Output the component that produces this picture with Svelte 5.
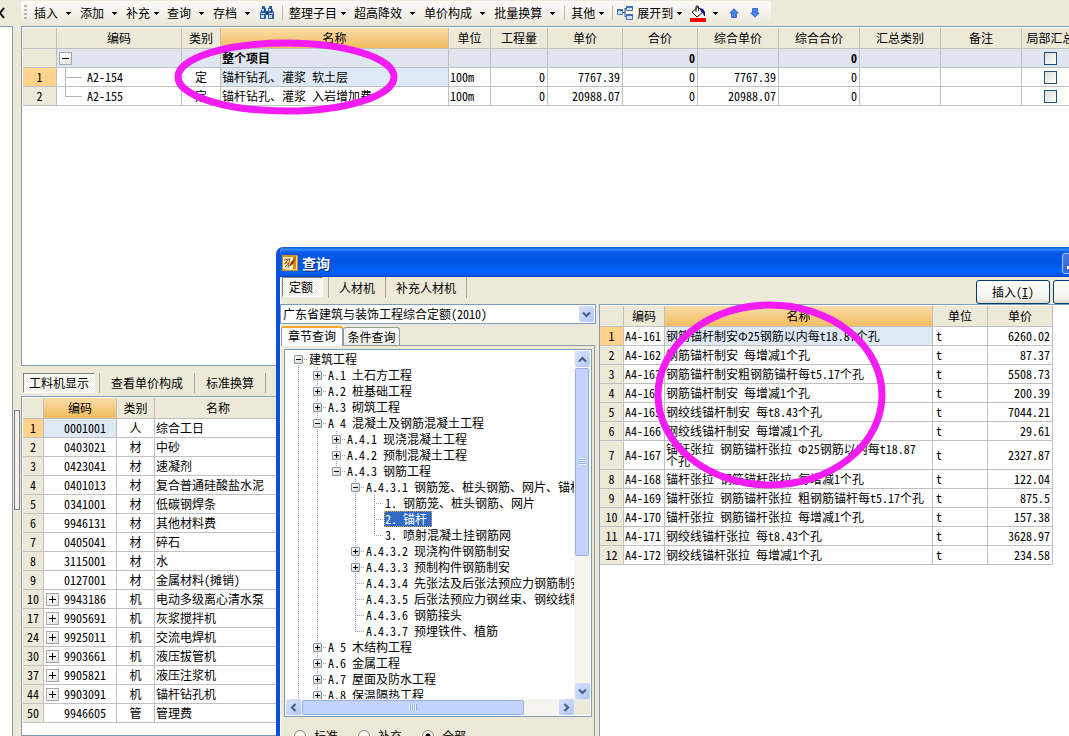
<script>
  const tools = [
    { label: '插入' },
    { label: '添加' },
    { label: '补充', tight: true },
    { label: '查询' },
    { label: '存档' },
    { icon: 'find' },
    { sep: true },
    { label: '整理子目', tight: true },
    { label: '超高降效' },
    { label: '单价构成' },
    { label: '批量换算' },
    { sep: true },
    { label: '其他', tight: true },
    { sep: true, near: true },
    { icon: 'expand', label: '展开到', tight: true },
    { icon: 'fill', name: '填充颜色', arrow: true },
    { icon: 'up', name: '上移' },
    { icon: 'down', name: '下移' }
  ];

  const mainCols = [34, 125, 39, 228, 42, 57, 75, 75, 81, 81, 81, 81, 58];
  const mainHead = ['', '编码', '类别', '名称', '单位', '工程量', '单价', '合价', '综合单价', '综合合价', '汇总类别', '备注', '局部汇总'];
  const mainRows = [
    { n: '', code: '', kind: '', name: '整个项目', unit: '', qty: '', price: '', total: '0', cp: '', ct: '0', root: true },
    { n: '1', code: 'A2-154', kind: '定', name: '锚杆钻孔、灌浆 软土层', unit: '100m', qty: '0', price: '7767.39', total: '0', cp: '7767.39', ct: '0', cur: true },
    { n: '2', code: 'A2-155', kind: '定', name: '锚杆钻孔、灌浆 入岩增加费', unit: '100m', qty: '0', price: '20988.07', total: '0', cp: '20988.07', ct: '0', last: true }
  ];

  const resources = [
    ['1', '0001001', '人', '综合工日'],
    ['2', '0403021', '材', '中砂'],
    ['3', '0423041', '材', '速凝剂'],
    ['4', '0401013', '材', '复合普通硅酸盐水泥'],
    ['5', '0341001', '材', '低碳钢焊条'],
    ['6', '9946131', '材', '其他材料费'],
    ['7', '0405041', '材', '碎石'],
    ['8', '3115001', '材', '水'],
    ['9', '0127001', '材', '金属材料(摊销)'],
    ['10', '9943186', '机', '电动多级离心清水泵', true],
    ['17', '9905691', '机', '灰浆搅拌机', true],
    ['24', '9925011', '机', '交流电焊机', true],
    ['30', '9903661', '机', '液压拔管机', true],
    ['37', '9905821', '机', '液压注浆机', true],
    ['44', '9903091', '机', '锚杆钻孔机', true],
    ['50', '9946605', '管', '管理费']
  ];

  // g: which ancestor levels keep a guide line; box: expander sign
  const tree = [
    { g: [], box: '-', t: '建筑工程', first: true },
    { g: [1], box: '+', t: 'A.1 土石方工程' },
    { g: [1], box: '+', t: 'A.2 桩基础工程' },
    { g: [1], box: '+', t: 'A.3 砌筑工程' },
    { g: [1], box: '-', t: 'A 4 混凝土及钢筋混凝土工程' },
    { g: [1, 1], box: '+', t: 'A.4.1 现浇混凝土工程' },
    { g: [1, 1], box: '+', t: 'A.4.2 预制混凝土工程' },
    { g: [1, 1], box: '-', t: 'A.4.3 钢筋工程', last: true },
    { g: [1, 1, 0], box: '-', t: 'A.4.3.1 钢筋笼、桩头钢筋、网片、锚杆' },
    { g: [1, 1, 0, 1], t: '1. 钢筋笼、桩头钢筋、网片' },
    { g: [1, 1, 0, 1], t: '2. 锚杆', sel: true },
    { g: [1, 1, 0, 1], t: '3. 喷射混凝土挂钢筋网', last: true },
    { g: [1, 1, 0], box: '+', t: 'A.4.3.2 现浇构件钢筋制安' },
    { g: [1, 1, 0], box: '+', t: 'A.4.3.3 预制构件钢筋制安' },
    { g: [1, 1, 0], t: 'A.4.3.4 先张法及后张法预应力钢筋制安' },
    { g: [1, 1, 0], t: 'A.4.3.5 后张法预应力钢丝束、钢绞线制安' },
    { g: [1, 1, 0], t: 'A.4.3.6 钢筋接头' },
    { g: [1, 1, 0], t: 'A.4.3.7 预埋铁件、植筋', last: true },
    { g: [1], box: '+', t: 'A 5 木结构工程' },
    { g: [1], box: '+', t: 'A.6 金属工程' },
    { g: [1], box: '+', t: 'A.7 屋面及防水工程' },
    { g: [1], box: '+', t: 'A.8 保温隔热工程' }
  ];

  const quotas = [
    ['1', 'A4-161', '钢筋锚杆制安Φ25钢筋以内每t18.87个孔', '6260.02'],
    ['2', 'A4-162', '钢筋锚杆制安 每增减1个孔', '87.37'],
    ['3', 'A4-163', '钢筋锚杆制安粗钢筋锚杆每t5.17个孔', '5508.73'],
    ['4', 'A4-164', '钢筋锚杆制安 每增减1个孔', '200.39'],
    ['5', 'A4-165', '钢绞线锚杆制安 每t8.43个孔', '7044.21'],
    ['6', 'A4-166', '钢绞线锚杆制安 每增减1个孔', '29.61'],
    ['7', 'A4-167', '锚杆张拉 钢筋锚杆张拉 Φ25钢筋以内每t18.87个孔', '2327.87'],
    ['8', 'A4-168', '锚杆张拉 钢筋锚杆张拉 每增减1个孔', '122.04'],
    ['9', 'A4-169', '锚杆张拉 钢筋锚杆张拉 粗钢筋锚杆每t5.17个孔', '875.5'],
    ['10', 'A4-170', '锚杆张拉 钢筋锚杆张拉 每增减1个孔', '157.38'],
    ['11', 'A4-171', '钢绞线锚杆张拉 每t8.43个孔', '3628.97'],
    ['12', 'A4-172', '钢绞线锚杆张拉 每增减1个孔', '234.58']
  ];

  let scope = $state('all');
</script>

{#snippet chevron(d)}
  <svg width="9" height="9" viewBox="0 0 9 9" aria-hidden="true"><path {d} fill="none" stroke="#4d6185" stroke-width="2.2" /></svg>
{/snippet}

{#snippet expander(sign)}
  <button class="expander" aria-label={sign === '+' ? '展开' : '折叠'}>
    <svg width="11" height="11" viewBox="0 0 11 11" aria-hidden="true">
      <path d={sign === '+' ? 'M2 5.5H9M5.5 2V9' : 'M2 5.5H9'} stroke="#000" fill="none" />
    </svg>
  </button>
{/snippet}

<div class="app">
  <div class="toolbar-row">
    <button class="close" aria-label="关闭">
      <svg width="5" height="12" viewBox="0 0 5 12" aria-hidden="true"><path d="M-4 1L4 11M4 1L-4 11" stroke="#000" stroke-width="2" /></svg>
    </button>
    <div class="toolbar" role="toolbar" aria-label="工具栏">
      <span class="grip"></span>
      {#each tools as t}
        {#if t.sep}
          <span class="tsep" class:near={t.near}></span>
        {:else}
          <button class="tool" class:tight={t.tight} class:plain={t.icon && !t.label} aria-label={t.name ?? t.label ?? '查找'}>
            {#if t.icon === 'find'}
              <svg width="16" height="16" viewBox="0 0 16 16" aria-hidden="true">
                <path d="M3 1h3v2h1v3h2V3h1V1h3v2l2 5v6H9v-4H7v4H1V8l2-5z" fill="#2c5fa8" />
                <path d="M3 4h2v2H3zM10 4h2v2h-2zM2 8h4v1H2zM10 8h4v1h-4zM2 10h3v3H2zM10 10h3v3h-3z" fill="#c4dcf6" />
                <path d="M7 7h2v2H7zM5 4h1v3H5zM12 4h1v3h-1z" fill="#173a75" />
              </svg>
            {:else if t.icon === 'expand'}
              <svg width="16" height="16" viewBox="0 0 16 16" aria-hidden="true">
                <path d="M6 7.500h2M8 3v9M8 3.500h2M8 11.500h2" stroke="#4c4c6c" fill="none" />
                <path d="M.5 4.500h5v5h-5zM9.500 1.500h6v4h-6zM9.500 9.500h6v5h-6z" fill="#cfe2fb" stroke="#4678bd" />
                <path d="M0 4h6v2H0zM9 1h7v2H9zM9 9h7v2H9z" fill="#3f72bd" />
              </svg>
            {:else if t.icon === 'fill'}
              <svg width="16" height="17" viewBox="0 0 16 17" aria-hidden="true">
                <path d="M2 7L8 2l5 5-6 5z" fill="#fff" stroke="#111" />
                <path d="M6 7V1.500Q7 0 8.500 1.500V6" fill="none" stroke="#111" />
                <path d="M10 3l3 1 2 3v4h-1l-1-3-2-1z" fill="#10108c" />
                <path d="M0 13h16v4H0z" fill="#f00" />
              </svg>
            {:else if t.icon === 'up'}
              <svg width="10" height="10" viewBox="0 0 10 10" aria-hidden="true"><path d="M5 .7L9.200 5H7.500v4.500h-5V5H.8z" fill="#4a80ea" stroke="#285bc0" stroke-width=".8" /></svg>
            {:else if t.icon === 'down'}
              <svg width="10" height="10" viewBox="0 0 10 10" aria-hidden="true"><path d="M5 9.300L9.200 5H7.500V.5h-5V5H.8z" fill="#4a80ea" stroke="#285bc0" stroke-width=".8" /></svg>
            {/if}
            {#if t.label}<span>{t.label}</span>{/if}
            {#if t.label || t.arrow}
              <svg width="5" height="3" viewBox="0 0 5 3" aria-hidden="true"><path d="M0 0h5v1H0zM1 1h3v1H1zM2 2h1v1H2z" /></svg>
            {/if}
          </button>
        {/if}
      {/each}
    </div>
  </div>

  <div class="workspace">
    <div class="left-pane"></div>
    <div class="splitter"><span class="split-handle"></span></div>
    <div class="panes">
      <section class="grid-pane">
        <table class="grid" style:width="{mainCols.reduce((a, b) => a + b)}px">
          <colgroup>{#each mainCols as w}<col style:width="{w}px" />{/each}</colgroup>
          <thead>
            <tr>{#each mainHead as h}<th class:hot={h === '名称'} scope="col">{h}</th>{/each}</tr>
          </thead>
          <tbody>
            {#each mainRows as r}
              <tr class:root={r.root}>
                <td class="rownum" class:cur={r.cur}>{r.n}</td>
                <td class="nopad">
                  <div class="code-cell">
                    {#if r.root}
                      {@render expander('-')}
                    {:else}
                      <span class="branch" class:last={r.last}></span>{r.code}
                    {/if}
                  </div>
                </td>
                <td class="mid">{r.kind}</td>
                <td class:focus={r.cur}>{r.name}</td>
                <td>{r.unit}</td>
                <td class="num">{r.qty}</td>
                <td class="num">{r.price}</td>
                <td class="num">{r.total}</td>
                <td class="num">{r.cp}</td>
                <td class="num">{r.ct}</td>
                <td></td>
                <td></td>
                <td class="mid"><input class="check" type="checkbox" aria-label="局部汇总" /></td>
              </tr>
            {/each}
          </tbody>
        </table>
      </section>

      <nav class="detail-tabs">
        <button class="tab pressed">工料机显示</button>
        <span class="tab-sep"></span>
        <button class="tab">查看单价构成</button>
        <button class="tab">标准换算</button>
        <button class="tab">换算信息</button>
      </nav>

      <section class="grid-pane">
        <table class="grid resources">
          <colgroup><col class="w21" /><col class="w73" /><col class="w38" /><col class="w127" /></colgroup>
          <thead>
            <tr><th scope="col"></th><th scope="col" class="hot">编码</th><th scope="col">类别</th><th scope="col">名称</th></tr>
          </thead>
          <tbody>
            {#each resources as [n, code, kind, name, more], i}
              <tr>
                <td class="rownum" class:cur={i === 0}>{n}</td>
                <td class="nopad" class:focus={i === 0}>
                  <div class="res-code">
                    {#if more}{@render expander('+')}{/if}
                    <span>{code}</span>
                  </div>
                </td>
                <td class="mid">{kind}</td>
                <td>{name}</td>
              </tr>
            {/each}
          </tbody>
        </table>
      </section>
    </div>
  </div>

  <div class="dialog" role="dialog" aria-labelledby="dialog-title">
    <header class="titlebar">
      <svg width="16" height="16" viewBox="0 0 16 16" aria-hidden="true">
        <path d="M0 0h16v16H0z" fill="#d98a1c" />
        <path d="M1 2h10v12H1z" fill="#fff3d0" />
        <path d="M14 1v13H3v1h12V1z" fill="#ffe08a" />
        <path d="M2 5l5-1-4 4h4l-4 4M8 3L6 13M2 9l3-2" stroke="#b0600c" fill="none" />
        <path d="M14 2L9 7l-2 5 4-3z" fill="#8a3c06" />
      </svg>
      <h1 id="dialog-title">查询</h1>
      <button class="winbtn" aria-label="最小化"><i></i></button>
      <button class="winbtn" aria-label="最大化"></button>
      <button class="winbtn" aria-label="关闭窗口"></button>
    </header>

    <div class="dialog-tools">
      <button class="tab pressed">定额</button>
      <span class="tab-sep"></span>
      <button class="tab">人材机</button>
      <button class="tab">补充人材机</button>
      <div class="actions">
        <button class="push">插入(<u>I</u>)</button>
        <button class="push" aria-label="替换"></button>
      </div>
    </div>

    <div class="dialog-body">
      <aside class="finder">
        <div class="combo">
          <select aria-label="定额库"><option>广东省建筑与装饰工程综合定额(2010)</option></select>
          <span class="combo-arrow">{@render chevron('M1 2.500L4.500 6L8 2.500')}</span>
        </div>
        <div class="page-tabs" role="tablist">
          <button role="tab" aria-selected="true" class="ptab on">章节查询</button>
          <button role="tab" aria-selected="false" class="ptab">条件查询</button>
        </div>
        <div class="page">
          <div class="tree-box">
            <ul class="tree">
              {#each tree as n}
                <li>
                  {#each n.g as on}<span class="guide" class:on></span>{/each}
                  <span class="guide own" class:on={!n.last && !n.first} class:half={n.last} class:start={n.first}>
                    {#if n.box}
                      <button class="node" aria-label={n.box === '+' ? '展开' : '折叠'}>
                        <svg width="7" height="7" viewBox="0 0 7 7" aria-hidden="true"><path d={n.box === '+' ? 'M1 3.500H6M3.500 1V6' : 'M1 3.500H6'} stroke="#000" /></svg>
                      </button>
                    {/if}
                  </span>
                  <span class="leaf" class:sel={n.sel}>{n.t}</span>
                </li>
              {/each}
            </ul>
            <div class="vbar">
              <button class="sbtn" aria-label="向上滚动">{@render chevron('M1 6.500L4.500 3L8 6.500')}</button>
              <span class="vthumb"><i></i></span>
              <button class="sbtn" aria-label="向下滚动">{@render chevron('M1 2.500L4.500 6L8 2.500')}</button>
            </div>
            <div class="hbar">
              <button class="sbtn" aria-label="向左滚动">{@render chevron('M6.500 1L3 4.500L6.500 8')}</button>
              <span class="hthumb"><i></i></span>
              <button class="sbtn" aria-label="向右滚动">{@render chevron('M2.500 1L6 4.500L2.500 8')}</button>
            </div>
            <div class="corner"></div>
          </div>
          <div class="scopes">
            <label><input type="radio" bind:group={scope} value="std" />标准</label>
            <label><input type="radio" bind:group={scope} value="add" />补充</label>
            <label><input type="radio" bind:group={scope} value="all" />全部</label>
          </div>
        </div>
      </aside>

      <section class="results">
        <table class="grid quota">
          <colgroup><col class="w24" /><col class="w41" /><col class="w268" /><col class="w55" /><col class="w65" /></colgroup>
          <thead>
            <tr><th scope="col"></th><th scope="col">编码</th><th scope="col" class="hot">名称</th><th scope="col">单位</th><th scope="col">单价</th></tr>
          </thead>
          <tbody>
            {#each quotas as [n, code, name, price], i}
              <tr>
                <td class="rownum" class:cur={i === 0}>{n}</td>
                <td>{code}</td>
                <td class="wrap" class:focus={i === 0}>{name}</td>
                <td class="unit">t</td>
                <td class="num">{price}</td>
              </tr>
            {/each}
          </tbody>
        </table>
      </section>
    </div>
  </div>

  <svg class="mark mark-top" viewBox="0 0 224 76" aria-hidden="true"><ellipse cx="112" cy="38" rx="108" ry="34" /></svg>
  <svg class="mark mark-dialog" viewBox="0 0 232 188" aria-hidden="true"><ellipse cx="116" cy="94" rx="112" ry="90" /></svg>
</div>

<style>
  :global(body) {
    margin: 0;
    background: #ece9d8;
  }
  .app {
    position: relative;
    display: flex;
    flex-direction: column;
    height: 100vh;
    overflow: hidden;
    background: #ece9d8;
    color: #000;
    font-family: 'Noto Sans CJK SC', sans-serif;
    font-size: 12px;
    line-height: 16px;
    font-feature-settings: 'hwid';
    white-space: pre;
  }
  button,
  select,
  input {
    margin: 0;
    padding: 0;
    border: 0;
    background: none;
    color: inherit;
    font: inherit;
    font-feature-settings: inherit;
    box-sizing: border-box;
  }
  svg {
    display: block;
    flex: none;
  }

  .toolbar-row {
    display: flex;
    flex: none;
    height: 26px;
  }
  .close {
    width: 21px;
    display: flex;
    align-items: center;
  }
  .toolbar {
    display: flex;
    align-items: center;
    height: 24px;
    margin-top: 1px;
    background: linear-gradient(#fbfaf6, #f3f1e8 60%, #e9e6d8);
    border-radius: 2px;
  }
  .grip {
    width: 3px;
    height: 16px;
    margin: 0 7px 0 3px;
    background: repeating-linear-gradient(#bdb9a6 0 2px, transparent 2px 4px);
  }
  .tool {
    display: flex;
    align-items: center;
    gap: 8px;
    height: 22px;
    padding-right: 9px;
  }
  .tool.tight {
    gap: 4px;
    padding-right: 8px;
  }
  .tool.plain {
    gap: 7px;
    padding-right: 11px;
  }
  .tool.plain:has(+ .tsep) {
    padding-right: 7px;
  }
  .tsep {
    width: 1px;
    height: 14px;
    margin-right: 6px;
    background: #bdb9a6;
  }
  .tsep.near {
    margin-right: 4px;
  }

  .workspace {
    flex: 1;
    display: flex;
    min-height: 0;
  }
  .left-pane {
    width: 12px;
    background: #fff;
    border: solid #7f9db9;
    border-width: 1px 1px 0 0;
  }
  .splitter {
    width: 8px;
    display: flex;
    align-items: center;
    justify-content: center;
  }
  .split-handle {
    width: 4px;
    height: 98px;
    margin-top: 158px;
    border: 1px solid #808080;
    background: #f4f2e8;
  }
  .panes {
    flex: 1;
    min-width: 0;
    display: flex;
    flex-direction: column;
  }
  .grid-pane {
    flex: 1 1 0;
    min-height: 0;
    overflow: hidden;
    background: #fff;
    border: solid #7f9db9;
    border-width: 1px 0 1px 1px;
    padding: 1px 0 0 1px;
    box-sizing: border-box;
  }

  .grid {
    table-layout: fixed;
    border-spacing: 0;
    width: 453px;
  }
  .grid.resources {
    width: 259px;
  }
  .w21 { width: 21px; }
  .w24 { width: 24px; }
  .w38 { width: 38px; }
  .w41 { width: 41px; }
  .w55 { width: 55px; }
  .w65 { width: 65px; }
  .w73 { width: 73px; }
  .w127 { width: 127px; }
  .w268 { width: 268px; }
  .grid th {
    height: 20px;
    padding: 0;
    font-weight: 400;
    text-align: center;
    background: #ece9d8;
    border: solid #c0c0c0;
    border-width: 0 1px 1px 0;
  }
  .grid th.hot {
    background: linear-gradient(#fbdcaa, #f0bd5e);
  }
  .grid td {
    height: 18px;
    padding: 0 2px 0 1px;
    border: solid #c0c0c0;
    border-width: 0 1px 1px 0;
    background: #fff;
    overflow: hidden;
  }
  .grid td.num {
    text-align: right;
  }
  .grid td.mid {
    text-align: center;
    padding: 0;
  }
  .grid td.nopad {
    padding: 0;
  }
  .grid td.focus {
    background: #dfe9f5;
  }
  .grid td.unit {
    padding-left: 3px;
  }
  .grid .root td {
    background: #dfe6f0;
    font-weight: 700;
  }
  .grid td.rownum {
    padding: 0;
    text-align: center;
    background: #ece9d8;
  }
  .grid td.rownum.cur {
    background: #ffd38c;
  }
  .grid td.wrap {
    white-space: pre-wrap;
    line-height: 12px;
    padding: 2px 6px 2px 1px;
    height: 14px;
  }
  .code-cell {
    display: flex;
    align-items: center;
    height: 18px;
    padding-left: 2px;
  }
  .branch {
    align-self: stretch;
    width: 28px;
    background:
      linear-gradient(#b4b4b4, #b4b4b4) 6px 0 / 1px 100% no-repeat,
      linear-gradient(#b4b4b4, #b4b4b4) 6px 9px / 17px 1px no-repeat;
  }
  .branch.last {
    background:
      linear-gradient(#b4b4b4, #b4b4b4) 6px 0 / 1px 9px no-repeat,
      linear-gradient(#b4b4b4, #b4b4b4) 6px 9px / 17px 1px no-repeat;
  }
  .res-code {
    display: flex;
    align-items: center;
    justify-content: flex-end;
    gap: 5px;
    height: 18px;
    padding-right: 10px;
  }
  .expander {
    width: 13px;
    height: 13px;
    border: 1px solid #a8a8a8;
    background: linear-gradient(135deg, #fff, #e4e4e0);
  }
  .check {
    appearance: none;
    display: block;
    width: 13px;
    height: 13px;
    margin: 0 auto;
    border: 1px solid #1c5180;
    background: linear-gradient(135deg, #dcdcd7, #fff);
  }

  .detail-tabs {
    flex: none;
    display: flex;
    align-items: center;
    height: 30px;
    padding: 4px 0 0 2px;
    box-sizing: border-box;
    overflow: hidden;
  }
  .tab {
    height: 20px;
    padding: 0 11px;
    border-right: 1px solid #aca899;
    flex: none;
  }
  .tab.pressed {
    padding: 0 5px;
    border: 1px solid;
    border-color: #808080 #fff #fff #808080;
    background: repeating-conic-gradient(#fff 0 25%, #efede2 0 50%) 0 0 / 2px 2px;
  }
  .tab-sep {
    flex: none;
    width: 1px;
    height: 20px;
    margin-left: 4px;
    background: #aca899;
  }

  .dialog {
    position: absolute;
    inset: 247px -66px 0 276px;
    display: flex;
    flex-direction: column;
    overflow: hidden;
    background: #ece9d8;
    border-left: 4px solid #0a4fe0;
    border-radius: 7px 0 0 0;
    box-shadow: inset 1px 0 0 #fff;
  }
  .titlebar {
    flex: none;
    display: flex;
    align-items: center;
    gap: 2px;
    height: 30px;
    margin-left: -4px;
    padding: 2px 6px 0;
    box-sizing: border-box;
    color: #fff;
    background: linear-gradient(#0a50cc, #2f8cff 8%, #0a5ae8 18%, #0054e3 50%, #0262f8 80%, #0059ee 92%, #003fb8);
  }
  .titlebar h1 {
    flex: 1;
    margin: 0;
    padding-left: 2px;
    font-size: 14px;
    line-height: 20px;
    font-weight: 700;
    text-shadow: 1px 1px 0 #0a2a80;
  }
  .winbtn {
    width: 21px;
    height: 21px;
    border: 1px solid #a9c3f6;
    border-radius: 3px;
    background: linear-gradient(135deg, #4a78ea, #2358d8);
    display: flex;
    align-items: flex-end;
    padding: 4px;
  }
  .winbtn i {
    width: 7px;
    height: 3px;
    background: #fff;
  }
  .dialog-tools {
    flex: none;
    display: flex;
    align-items: flex-start;
    height: 27px;
    padding-left: 2px;
  }
  .dialog-tools .tab {
    height: 21px;
    padding: 0 10px;
  }
  .dialog-tools .tab.pressed {
    height: 20px;
    padding: 0 9px 0 6px;
  }
  .dialog-tools .tab-sep {
    height: 21px;
    margin-left: 5px;
  }
  .actions {
    display: flex;
    gap: 3px;
    margin: 3px 8px 0 auto;
  }
  .push {
    width: 74px;
    height: 24px;
    border: 1px solid #003c74;
    border-radius: 3px;
    background: linear-gradient(#fff, #f3f2ea 80%, #dcd8c8);
  }

  .dialog-body {
    flex: 1;
    display: flex;
    gap: 3px;
    min-height: 0;
  }
  .finder {
    flex: none;
    width: 316px;
    display: flex;
    flex-direction: column;
  }
  .combo {
    display: flex;
    align-items: center;
    height: 18px;
    border: 1px solid #7f9db9;
    background: #fff;
    padding-right: 1px;
  }
  .combo select {
    appearance: none;
    flex: 1;
    min-width: 0;
    height: 18px;
    padding-left: 2px;
  }
  .combo-arrow,
  .sbtn {
    display: flex;
    align-items: center;
    justify-content: center;
    width: 15px;
    height: 16px;
    border-radius: 2px;
    background: linear-gradient(135deg, #d6e2fd, #b4c8f6);
  }
  .page-tabs {
    display: flex;
    align-items: flex-end;
    height: 21px;
    padding-left: 1px;
  }
  .ptab {
    position: relative;
    width: 57px;
    height: 18px;
    border: 1px solid #919b9c;
    border-bottom: 0;
    border-radius: 3px 3px 0 0;
    background: linear-gradient(#fff, #ecebe4);
  }
  .ptab.on {
    z-index: 1;
    width: 62px;
    height: 20px;
    margin-bottom: -1px;
    padding-bottom: 2px;
    border-top: 2px solid #f6a828;
    background: #fcfcfe;
  }
  .page {
    flex: 1;
    min-height: 0;
    display: flex;
    flex-direction: column;
    margin-left: 1px;
    margin-right: 1px;
    padding: 3px 2px 0 3px;
    background: #ece9d8;
    border: solid #919b9c;
    border-width: 1px 1px 0 0;
  }
  .tree-box {
    flex: 1;
    min-height: 0;
    display: grid;
    grid-template: minmax(0, 1fr) 16px / minmax(0, 1fr) 16px;
    padding: 1px;
    border: 1px solid #7f9db9;
    background: #fff;
  }
  .tree {
    margin: 0;
    padding: 0 0 0 3px;
    list-style: none;
    overflow: hidden;
  }
  .tree li {
    display: flex;
    height: 16px;
  }
  .guide {
    flex: none;
    width: 19px;
  }
  .guide.on {
    background: repeating-linear-gradient(#a0a0a0 0 1px, transparent 1px 2px) 9px 0 / 1px 100% no-repeat;
  }
  .own {
    display: flex;
    align-items: center;
    padding-left: 5px;
    box-sizing: border-box;
    background: repeating-linear-gradient(90deg, #a0a0a0 0 1px, transparent 1px 2px) 9px 8px / 9px 1px no-repeat;
  }
  .own.on {
    background:
      repeating-linear-gradient(#a0a0a0 0 1px, transparent 1px 2px) 9px 0 / 1px 100% no-repeat,
      repeating-linear-gradient(90deg, #a0a0a0 0 1px, transparent 1px 2px) 9px 8px / 9px 1px no-repeat;
  }
  .own.half {
    background:
      repeating-linear-gradient(#a0a0a0 0 1px, transparent 1px 2px) 9px 0 / 1px 8px no-repeat,
      repeating-linear-gradient(90deg, #a0a0a0 0 1px, transparent 1px 2px) 9px 8px / 9px 1px no-repeat;
  }
  .own.start {
    background:
      repeating-linear-gradient(#a0a0a0 0 1px, transparent 1px 2px) 9px 8px / 1px 8px no-repeat,
      repeating-linear-gradient(90deg, #a0a0a0 0 1px, transparent 1px 2px) 9px 8px / 9px 1px no-repeat;
  }
  .node {
    width: 9px;
    height: 9px;
    border: 1px solid #7898b5;
    border-radius: 1px;
    background: linear-gradient(135deg, #fff, #d6cfc0);
  }
  .leaf {
    flex: none;
    padding: 0 1px;
  }
  .leaf.sel {
    background: #316ac5;
    color: #fff;
    outline: 1px dotted #e0a040;
    outline-offset: -1px;
    padding-right: 5px;
  }
  .vbar,
  .hbar {
    display: flex;
    gap: 1px;
    background: #f5f4ee;
  }
  .vbar {
    flex-direction: column;
    align-items: center;
  }
  .hbar {
    align-items: center;
  }
  .vthumb,
  .hthumb {
    display: flex;
    align-items: center;
    justify-content: center;
    box-sizing: border-box;
    border: 1px solid #98b0e4;
    border-radius: 2px;
    background: #c3d3fb;
  }
  .vthumb {
    width: 14px;
    height: 54%;
    margin-bottom: auto;
  }
  .hthumb {
    width: 77%;
    height: 15px;
    margin-right: auto;
  }
  .vthumb i {
    width: 7px;
    height: 7px;
    background: repeating-linear-gradient(#eef4fe 0 1px, #8cb0f8 1px 2px);
  }
  .hthumb i {
    width: 8px;
    height: 7px;
    background: repeating-linear-gradient(90deg, #eef4fe 0 1px, #8cb0f8 1px 2px);
  }
  .corner {
    background: #ece9d8;
  }
  .scopes {
    flex: none;
    display: flex;
    gap: 20px;
    height: 8px;
    padding: 11px 0 0 10px;
    overflow: hidden;
  }
  .scopes label {
    display: flex;
    gap: 8px;
    height: 16px;
    align-items: center;
  }
  .scopes input {
    appearance: none;
    width: 12px;
    height: 12px;
    border: 1px solid #8a8a84;
    border-radius: 50%;
    background: #f6f5ef;
  }
  .scopes input:checked {
    background: radial-gradient(circle, #000 0 2px, #f6f5ef 3px);
  }

  .results {
    flex: 1;
    min-width: 0;
    background: #fff;
    border: solid #7f9db9;
    border-width: 1px 0 0 1px;
    padding-top: 1px;
    overflow: hidden;
  }

  .mark {
    position: absolute;
    fill: none;
    stroke: #f41cf4;
    stroke-width: 7;
    pointer-events: none;
  }
  .mark-top {
    left: 174px;
    top: 39px;
    width: 224px;
    height: 76px;
  }
  .mark-dialog {
    left: 654px;
    top: 301px;
    width: 232px;
    height: 188px;
  }
</style>
